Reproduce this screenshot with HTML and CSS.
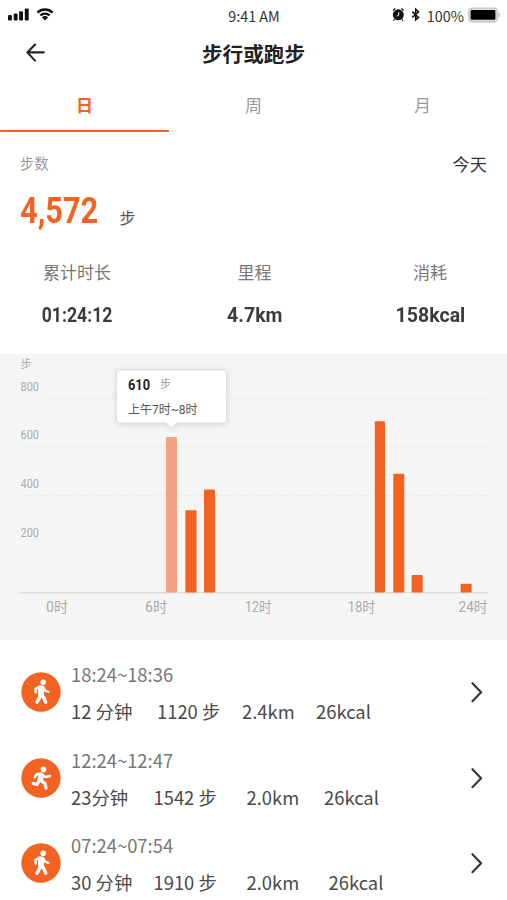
FILE: index.html
```html
<!DOCTYPE html>
<html lang="zh-CN">
<head>
<meta charset="utf-8">
<meta name="viewport" content="width=device-width, initial-scale=1">
<title>步行或跑步</title>
<link rel="stylesheet" href="styles.css">
</head>
<body>
<svg width="0" height="0" class="defs">
  <symbol id="walk" viewBox="0 0 40 40">
    <circle cx="22.2" cy="10.2" r="2.8" fill="#fff"/>
    <path d="M18.4 14.8L21.8 15.2L21.4 22.6L18.8 22.8Z" fill="#fff" stroke="#fff" stroke-width="3.1" stroke-linejoin="round"/>
    <path d="M18.4 14.9L14.6 16.8L14.6 20.6M22.3 15.8L24.3 18.6L27.3 19.8" fill="none" stroke="#fff" stroke-width="2.4" stroke-linecap="round" stroke-linejoin="round"/>
    <path d="M19.2 23L18.3 26.2L16 30.2M21 23L23 26L24.7 30.2" fill="none" stroke="#fff" stroke-width="3.4" stroke-linecap="round" stroke-linejoin="round"/>
  </symbol>
  <symbol id="run" viewBox="0 0 40 40">
    <circle cx="22.5" cy="11.4" r="2.8" fill="#fff"/>
    <path d="M19.2 16.2L21.4 16.8L20.2 22.2L18.2 22Z" fill="#fff" stroke="#fff" stroke-width="3.4" stroke-linejoin="round"/>
    <path d="M19.4 15.5L15.8 16.2L13.7 19.2M21.8 17.2L24.5 19L29 18" fill="none" stroke="#fff" stroke-width="2.4" stroke-linecap="round" stroke-linejoin="round"/>
    <path d="M18.1 22.5L16 26.4L12.2 25.5M20 22.6L24 25.6L25 30.2" fill="none" stroke="#fff" stroke-width="3.2" stroke-linecap="round" stroke-linejoin="round"/>
  </symbol>
  <symbol id="chevron" viewBox="0 0 14 22">
    <path d="M2.4 2.2L11.1 11.2L2.4 20.2" fill="none" stroke="#333" stroke-width="2.1" stroke-linecap="round" stroke-linejoin="round"/>
  </symbol>
</svg>

<header class="status">
  <svg class="signal" width="50" height="16" viewBox="0 0 50 16">
    <g fill="#111">
      <rect x="0" y="9" width="3.9" height="5.4" rx="1.2"/>
      <rect x="5.7" y="7.4" width="3.9" height="7" rx="1.2"/>
      <rect x="11.1" y="5.2" width="3.9" height="9.2" rx="1.2"/>
      <rect x="16.8" y="2.4" width="3.9" height="12" rx="1.2"/>
      <path d="M34 11.5a3.8 3.8 0 0 1 6 0L37 14.4Z"/>
    </g>
    <path d="M29.4 6.7a10.8 10.8 0 0 1 15.2 0M32.3 9.5a6.8 6.8 0 0 1 9.4 0" fill="none" stroke="#111" stroke-width="2.4"/>
  </svg>
  <span class="clock">9:41 AM</span>
  <div class="status-right">
    <svg width="30" height="16" viewBox="0 0 30 16">
      <circle cx="6.3" cy="7.8" r="5.5" fill="#111"/>
      <path d="M1 3.5L3.3 1.5M11.6 3.5L9.3 1.5M2.5 12.3L1.5 13.6M10.1 12.3L11.1 13.6" stroke="#111" stroke-width="1.3"/>
      <path d="M6.7 5.2V8.2L4.9 9.1" fill="none" stroke="#fff" stroke-width="1"/>
      <path d="M20.3 4.6L26.6 10.4L23.7 12.9V2.1L26.6 4.8L20.3 10.4" fill="none" stroke="#111" stroke-width="1.5"/>
    </svg>
    <span class="percent">100%</span>
    <svg width="33" height="16" viewBox="0 0 33 16">
      <rect x=".9" y="1.1" width="28.2" height="13.6" rx="3.2" fill="#e4e4e4" stroke="#c4c4c4" stroke-width="1.4"/>
      <rect x="2.6" y="3" width="24.8" height="9.8" rx="1" fill="#000"/>
      <path d="M30.8 5.7q2 2.1 0 4.2Z" fill="#bbb" stroke="#bbb" stroke-width=".6"/>
    </svg>
  </div>
</header>

<div class="titlebar">
  <svg class="back" width="20" height="20" viewBox="0 0 20 20">
    <path d="M10 1.4L2.3 9.4L10 17.6M2.6 9.4H18.8" fill="none" stroke="#222" stroke-width="2.1" stroke-linecap="round" stroke-linejoin="round"/>
  </svg>
  <h1>步行或跑步</h1>
</div>

<nav class="tabs">
  <a class="tab active">日</a>
  <a class="tab">周</a>
  <a class="tab">月</a>
</nav>

<section class="summary">
  <div class="summary-head"><span class="caption">步数</span><span class="today">今天</span></div>
  <div class="total"><span class="total-number">4,572</span><span class="total-unit">步</span></div>
  <div class="stats">
    <div class="stat"><span class="label">累计时长</span><strong class="time">01:24:12</strong></div>
    <div class="stat"><span class="label">里程</span><strong class="distance">4.7km</strong></div>
    <div class="stat"><span class="label">消耗</span><strong class="energy">158kcal</strong></div>
  </div>
</section>

<section class="chart">
  <svg width="507" height="286" viewBox="0 0 507 286">
    <g class="gridlines">
      <path d="M50 44.5H488M20 92.5H488M20 141.5H488"/>
    </g>
    <path d="M20 238.7H488" stroke="#dedede" stroke-width="1.4"/>
    <g class="bars">
      <rect class="selected" x="166" y="83" width="11" height="155.5" rx="1"/>
      <rect x="185.4" y="156.3" width="11.2" height="82.2" rx="1"/>
      <rect x="204" y="135.4" width="11" height="103.1" rx="1"/>
      <rect x="374.8" y="67.2" width="10.2" height="171.3" rx="1"/>
      <rect x="393.3" y="119.7" width="11" height="118.8" rx="1"/>
      <rect x="411.6" y="221" width="11.1" height="17.5" rx="1"/>
      <rect x="460.6" y="229.7" width="11" height="8.8" rx="1"/>
    </g>
    <g class="axis">
      <text x="20.5" y="13.5" font-size="11.5">步</text>
      <text x="20.5" y="36.6" textLength="18.5" lengthAdjust="spacingAndGlyphs">800</text>
      <text x="20.5" y="85" textLength="18.5" lengthAdjust="spacingAndGlyphs">600</text>
      <text x="20.5" y="133.8" textLength="18.5" lengthAdjust="spacingAndGlyphs">400</text>
      <text x="20.5" y="182.6" textLength="18.5" lengthAdjust="spacingAndGlyphs">200</text>
    </g>
    <g class="axis hours">
      <text x="46" y="257.6" textLength="22" lengthAdjust="spacingAndGlyphs">0时</text>
      <text x="145" y="257.6" textLength="22" lengthAdjust="spacingAndGlyphs">6时</text>
      <text x="245" y="257.6" textLength="26.5" lengthAdjust="spacingAndGlyphs">12时</text>
      <text x="347.8" y="257.6" textLength="27.5" lengthAdjust="spacingAndGlyphs">18时</text>
      <text x="458.5" y="257.6" textLength="29" lengthAdjust="spacingAndGlyphs">24时</text>
    </g>
    <g class="tooltip">
      <path d="M119.5 16H223.5a3 3 0 0 1 3 3V66a3 3 0 0 1-3 3H176.5L171.5 74.5L166.5 69H119.5a3 3 0 0 1-3-3V19a3 3 0 0 1 3-3Z"/>
      <text class="tip-number" x="128" y="35.8" textLength="22" lengthAdjust="spacingAndGlyphs">610</text>
      <text class="tip-unit" x="160" y="34">步</text>
      <text class="tip-range" x="128" y="59.8" textLength="69.5" lengthAdjust="spacingAndGlyphs">上午7时~8时</text>
    </g>
  </svg>
</section>

<main class="list">
  <div class="row">
    <svg class="badge" width="40" height="40"><circle cx="20" cy="20" r="19.7" fill="#f26322"/><use href="#walk"/></svg>
    <div class="detail">
      <div class="period">18:24~18:36</div>
      <div class="metrics first"><span>12 分钟</span><span>1120 步</span><span>2.4km</span><span>26kcal</span></div>
    </div>
    <svg class="chevron" width="14" height="22"><use href="#chevron"/></svg>
  </div>
  <div class="row">
    <svg class="badge" width="40" height="40"><circle cx="20" cy="20" r="19.7" fill="#f26322"/><use href="#run"/></svg>
    <div class="detail">
      <div class="period">12:24~12:47</div>
      <div class="metrics second"><span>23分钟</span><span>1542 步</span><span>2.0km</span><span>26kcal</span></div>
    </div>
    <svg class="chevron" width="14" height="22"><use href="#chevron"/></svg>
  </div>
  <div class="row">
    <svg class="badge" width="40" height="40"><circle cx="20" cy="20" r="19.7" fill="#f26322"/><use href="#walk"/></svg>
    <div class="detail">
      <div class="period">07:24~07:54</div>
      <div class="metrics third"><span>30 分钟</span><span>1910 步</span><span>2.0km</span><span>26kcal</span></div>
    </div>
    <svg class="chevron" width="14" height="22"><use href="#chevron"/></svg>
  </div>
</main>
</body>
</html>
```
FILE: styles.css
```css
* { box-sizing: border-box; }
body {
  margin: 0;
  width: 507px;
  height: 900px;
  overflow: hidden;
  background: #fff;
  color: #333;
  font-family: "Noto Sans CJK SC", sans-serif;
}
svg { display: block; flex: none; }
.defs { position: absolute; }

.status {
  display: grid;
  grid-template-columns: 1fr auto 1fr;
  align-items: center;
  height: 31px;
  padding: 0 6px 0 8px;
  font-size: 14.4px;
  line-height: 31px;
  color: #333;
}
.signal { margin-top: -3px; }
.clock { margin-left: -1px; }
.status-right { display: flex; align-items: center; justify-content: flex-end; }
.status-right svg { margin-top: -2px; }
.percent { margin: 0 4px 0 5px; }

.titlebar {
  display: grid;
  grid-template-columns: 26px 1fr 26px;
  align-items: center;
  height: 44px;
  padding: 0 25px;
}
h1 {
  margin: 0;
  text-align: center;
  font-size: 20.6px;
  line-height: 44px;
  font-weight: 700;
  color: #222;
}

.tabs { display: grid; grid-template-columns: repeat(3, 1fr); height: 57px; }
.tab {
  height: 56.5px;
  line-height: 59px;
  text-align: center;
  font-size: 17px;
  color: #999;
  border-bottom: 2.6px solid transparent;
}
.tab.active { color: #f26322; font-weight: 700; border-color: #f26322; border-radius: 1px; }

.summary { height: 222px; padding: 0 20px; }
.summary-head {
  display: flex;
  justify-content: space-between;
  height: 56px;
  line-height: 62px;
}
.caption { font-size: 14.3px; color: #999; }
.today { font-size: 17.2px; line-height: 64px; color: #333; }
.total { display: flex; height: 64px; }
.total-number {
  width: 99.5px;
  height: 47px;
  font: 700 36px/47px Roboto, sans-serif;
  color: #f26322;
  transform: scaleX(.855);
  transform-origin: left;
}
.total-unit { font-size: 16px; line-height: 58px; color: #555; }
.stats { display: grid; grid-template-columns: 114px 1fr 114px; }
.stat { display: flex; flex-direction: column; align-items: center; }
.stat:nth-child(2) { padding-left: 2px; }
.label { font-size: 17px; line-height: 40px; color: #777; }
.stat strong {
  font: 700 21px/47px Roboto, sans-serif;
  color: #3b3b3b;
}
.time { transform: scaleX(.84); }
.distance, .energy { transform: scaleX(.93); }

.chart { height: 286px; background: #f5f5f5; }
.gridlines { fill: none; stroke: #e9e9e9; stroke-width: 1; stroke-dasharray: 3 2; }
.bars { fill: #f26322; }
.bars .selected { fill: #f4a27f; }
.axis { font-family: Roboto, "Noto Sans CJK SC", sans-serif; font-size: 12px; fill: #aaa; }
.hours { font-size: 14px; }
.tooltip path { fill: #fff; stroke: #dedede; stroke-width: 1; filter: drop-shadow(0 1px 3px rgba(0, 0, 0, .12)); }
.tooltip .tip-number { font: 700 15.5px Roboto, sans-serif; fill: #222; }
.tip-unit { font-size: 11px; fill: #999; }
.tip-range { font-family: Roboto, "Noto Sans CJK SC", sans-serif; font-size: 12.5px; fill: #555; }

.list { padding: 9.5px 23px 0 21px; }
.row { display: flex; align-items: center; height: 85.6px; }
.detail { flex: 1; padding: 2px 0 0 10px; font-size: 18.4px; line-height: 37px; white-space: nowrap; }
.period { color: #777; }
.metrics { display: grid; color: #4a4a4a; }
.first { grid-template-columns: 86px 85px 74px 1fr; }
.second { grid-template-columns: 82.5px 93px 77.5px 1fr; }
.third { grid-template-columns: 82.5px 93px 82px 1fr; }
```
